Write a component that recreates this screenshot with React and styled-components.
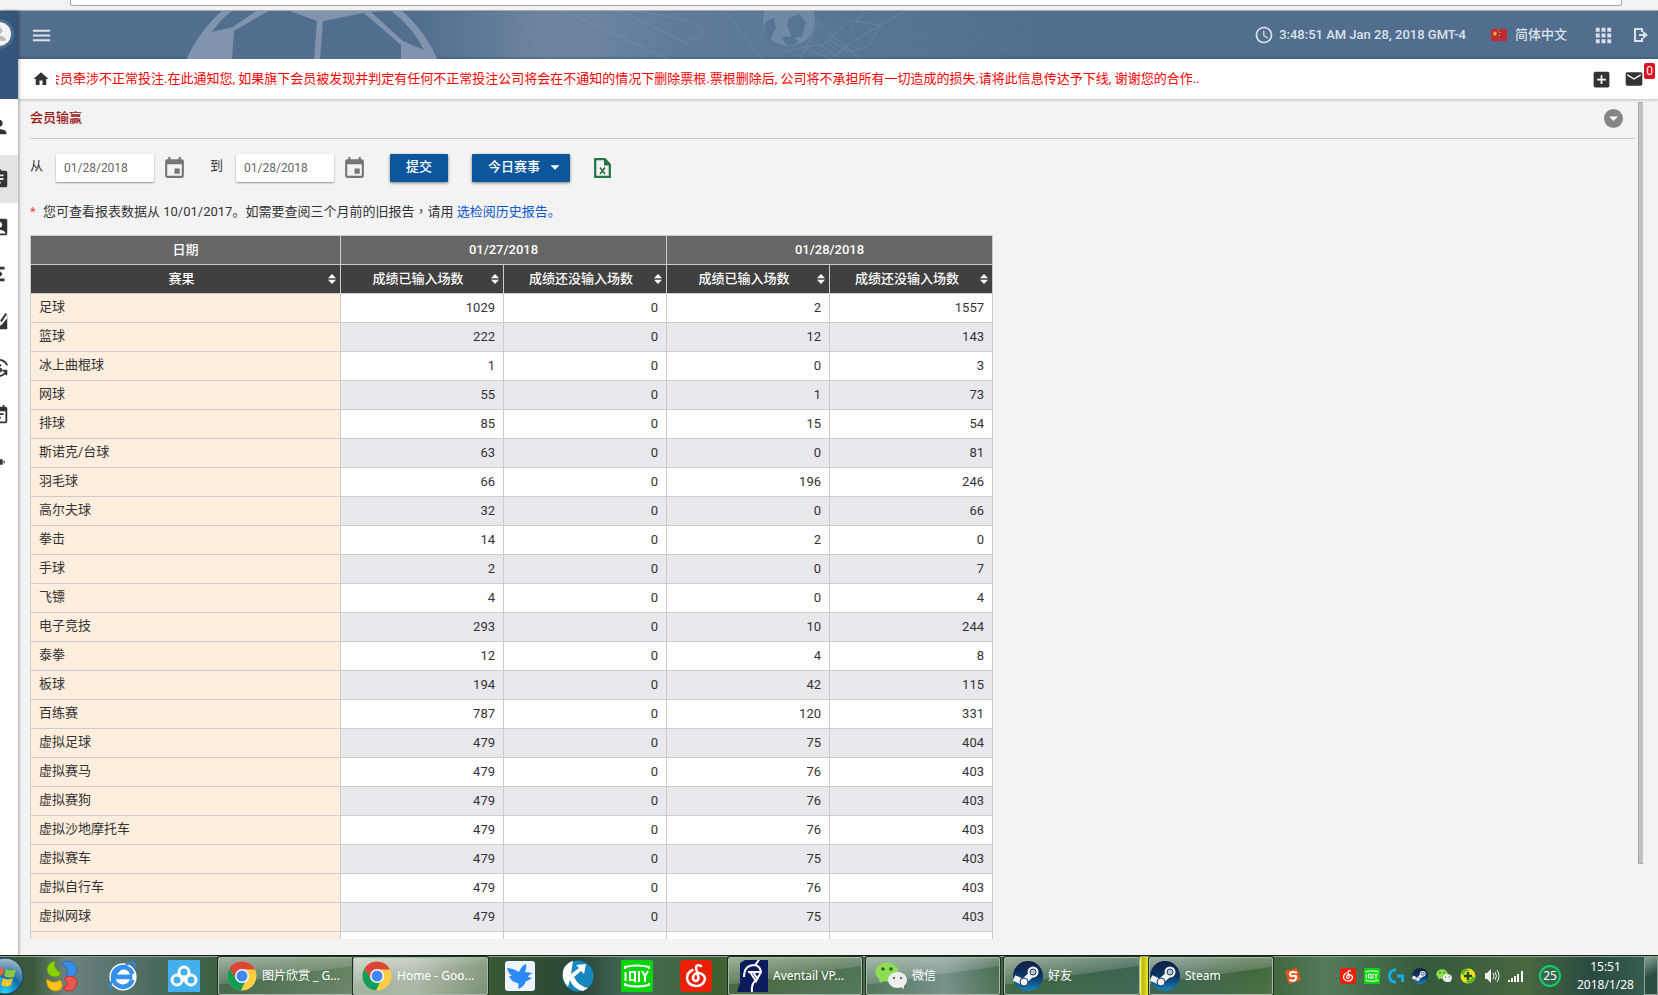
import React from "react";
import styled, { createGlobalStyle } from "styled-components";
import {
  MdMenu, MdAccessTime, MdApps, MdHome, MdAddBox, MdEmail, MdPerson,
  MdAssignment, MdAccountBox, MdFunctions, MdEventNote, MdEvent, MdArrowDropDown,
} from "react-icons/md";

const Global = createGlobalStyle`
  * { box-sizing: border-box; }
  body { margin: 0; background: #f3f3f3; color: #333; font: 13px/16px Roboto, "Noto Sans CJK SC", sans-serif; }
  button, input { font: inherit; margin: 0; }
  svg { display: block; flex: none; }
`;

const Screen = styled.div`
  display: flex;
  flex-direction: column;
  height: 100vh;
  overflow: hidden;
`;

/* browser chrome */
const BrowserStrip = styled.div`
  flex: none;
  height: 11px;
  padding: 0 36px 0 70px;
  background: #f2f2f2;
  border-bottom: 1px solid #a9a9a9;
`;
const AddressBar = styled.div`
  height: 6px;
  background: #fff;
  border: 1px solid #a5a5a5;
  border-top: 0;
  border-radius: 0 0 3px 3px;
`;

const AppBody = styled.div`
  flex: 1;
  min-height: 0;
  display: flex;
`;

/* sidebar */
const Sidebar = styled.aside`
  flex: none;
  width: 18px;
  overflow: hidden;
  background: #fff;
`;
const SidebarShell = styled.div`
  position: relative;
  z-index: 2;
  display: flex;
  box-shadow: 1px 0 3px rgba(0, 0, 0, 0.35);
`;
const Profile = styled.div`
  height: 88px;
  padding: 11px 7px 0 0;
  display: flex;
  justify-content: flex-end;
  background: #34567b;
`;
const Avatar = styled.div`
  flex: none;
  display: grid;
  place-items: center;
  width: 24px;
  height: 24px;
  border-radius: 50%;
  background: #f3f3f3;
  color: #bdbdbd;
  box-shadow: 0 0 0 3px #4d6c8f;
`;
const SideLink = styled.a`
  display: flex;
  align-items: center;
  justify-content: flex-end;
  height: ${(p) => (p.$active ? 48 : 47)}px;
  padding-right: 8px;
  color: #333;
  background: ${(p) => (p.$active ? "#e4e4e4" : "transparent")};
  &:first-child { height: 56px; }
`;

const Main = styled.div`
  flex: 1;
  min-width: 0;
  display: flex;
  flex-direction: column;
`;

/* header */
const Header = styled.header`
  position: relative;
  flex: none;
  height: 48px;
  overflow: hidden;
  background: linear-gradient(90deg, #526e8e 0 400px, #6c82a0 520px, #6b82a1 580px, #5f7a9a 660px, #587495 860px, #526e8e 1020px);
  box-shadow: inset 0 -2px 1px rgba(40, 70, 105, 0.3);
`;
const HeaderArt = styled.svg`
  position: absolute;
  left: 0;
  top: 0;
`;
const HeaderRow = styled.div`
  position: relative;
  display: flex;
  align-items: center;
  height: 100%;
  padding: 0 9px 0 12px;
  color: #dce2e9;
  font-weight: 500;
`;
const IconButton = styled.button`
  display: grid;
  place-items: center;
  padding: 0;
  border: 0;
  background: none;
  color: ${(p) => p.$color || "inherit"};
`;
const HeaderRight = styled.div`
  display: flex;
  align-items: center;
  margin-left: auto;
`;
const Clock = styled.div`
  display: flex;
  align-items: center;
  gap: 5px;
  margin-right: 25px;
`;
const Language = styled.button`
  display: flex;
  align-items: center;
  gap: 8px;
  padding: 0;
  margin-right: 25px;
  border: 0;
  background: none;
  color: inherit;
`;
const HeaderActions = styled.div`
  display: flex;
  align-items: center;
  gap: 18px;
`;

/* announcement */
const NoticeBar = styled.div`
  flex: none;
  display: flex;
  align-items: center;
  height: 41px;
  padding: 0 3px 0 14px;
  background: #fff;
  border-bottom: 1px solid #d2d2d2;
  box-shadow: 0 1px 2px rgba(0, 0, 0, 0.12);
`;
const HomeLink = styled.a`
  color: #333;
`;
const Ticker = styled.div`
  flex: 1;
  min-width: 0;
  margin: 0 40px 0 6px;
  overflow: hidden;
  white-space: nowrap;
  text-indent: -9px;
  color: #f00;
`;
const NoticeActions = styled.div`
  display: flex;
  align-items: center;
  gap: 12px;
`;
const MailBox = styled.div`
  position: relative;
  padding-right: 11px;
`;
const MailCount = styled.span`
  position: absolute;
  right: 0;
  top: -6px;
  padding: 0 2px;
  border-radius: 2px;
  background: #dc1322;
  color: #fff;
  font-size: 12px;
`;

/* report */
const Report = styled.main`
  flex: 1;
  min-height: 0;
  display: flex;
  padding: 2px 15px 16px 12px;
`;
const ReportBody = styled.div`
  flex: 1;
  min-width: 0;
  overflow: hidden;
  padding-right: 3px;
`;
const ScrollTrack = styled.div`
  flex: none;
  width: 5px;
`;
const ScrollThumb = styled.div`
  height: 91%;
  background: #c1c1c1;
  border: solid #aaa;
  border-width: 1px 0 1px 1px;
`;
const TitleRow = styled.div`
  display: flex;
  align-items: center;
  justify-content: space-between;
  height: 37px;
  padding: 0 12px 4px 0;
  border-bottom: 1px solid #ccc;
`;
const Title = styled.h1`
  margin: 0;
  font-size: 13px;
  font-weight: 500;
  color: #9b1515;
`;
const Filters = styled.form`
  display: flex;
  align-items: center;
  height: 28px;
  margin-top: 15px;
`;
const DateField = styled.div`
  display: flex;
  align-items: center;
  margin-right: 23px;
`;
const DateLabel = styled.label`
  width: 26px;
  padding-bottom: 4px;
`;
const DateInput = styled.input`
  width: 98px;
  height: 28px;
  margin-right: 8px;
  padding: 0 8px;
  border: 0;
  border-radius: 1px;
  background: #fff;
  box-shadow: 0 1px 2px rgba(0, 0, 0, 0.4);
  color: #666;
  font-size: 12px;
`;
const ActionButton = styled.button`
  display: flex;
  align-items: center;
  gap: 4px;
  height: 28px;
  margin-right: 24px;
  padding: 0 ${(p) => (p.$menu ? 4 : 16)}px 2px 16px;
  border: 0;
  border-radius: 1px;
  background: #0d569d;
  box-shadow: 0 1px 3px rgba(0, 0, 0, 0.5);
  color: #fff;
  font-weight: 500;
`;
const Hint = styled.p`
  margin: 22px 0 15px;
  white-space: nowrap;
`;
const Star = styled.span`
  display: inline-block;
  width: 13px;
  color: #f44336;
`;
const CenteredComma = styled.span`
  font-family: "Noto Sans CJK TC", sans-serif;
  line-height: 1;
`;
const HistoryLink = styled.a`
  color: #0b57d0;
  text-decoration: none;
`;
const Table = styled.table`
  width: 962px;
  table-layout: fixed;
  border-collapse: collapse;
`;
const GroupHead = styled.th`
  height: 29px;
  padding: 0;
  border: 1px solid #ccc;
  background: #666;
  color: #fff;
  font-weight: 500;
`;
const SortHead = styled(GroupHead)`
  background: #404040;
`;
const SortButton = styled.button`
  display: grid;
  grid-template-columns: 1fr 8px;
  align-items: center;
  width: 100%;
  padding: 0 4px;
  border: 0;
  background: none;
  color: #fff;
  font-weight: 500;
`;
const SportCell = styled.th`
  height: 29px;
  padding: 0 8px 2px;
  border: 1px solid #ccc;
  background: #ffeede;
  text-align: left;
  font-weight: 400;
`;
const CountCell = styled.td`
  height: 29px;
  padding: 0 8px;
  border: 1px solid #ccc;
  text-align: right;
`;
const SportRow = styled.tr`
  background: #fff;
  &:nth-child(even) { background: #e9e8ed; }
`;

/* taskbar */
const Taskbar = styled.footer`
  position: relative;
  z-index: 3;
  flex: none;
  display: flex;
  align-items: center;
  height: 40px;
  border-top: 1px solid #152019;
  box-shadow: inset 0 1px 0 #8fa295;
  color: #fff;
  font: 12px/16px "Noto Sans", "Noto Sans CJK SC", sans-serif;
  background: linear-gradient(90deg, #2f5032 0, #3b5c3c 2%, #6f8380 4%, #5e7873 6%, #48685a 10%, #3d6043 13%, #5a7a58 20%, #75896d 25%, #3a5a32 29%, #2a4638 35%, #466a58 38%, #3f6233 43%, #496e50 52%, #6f8b85 57%, #38603d 61%, #355c4a 70%, #3d6335 76%, #55795c 80%, #34593d 86%, #48683f 92%, #2a4a42 96%, #3b6050 100%);
`;
const StartButton = styled.button`
  flex: none;
  display: flex;
  justify-content: flex-end;
  width: 24px;
  padding: 0;
  border: 0;
  overflow: hidden;
  background: none;
`;
const Launchers = styled.div`
  display: flex;
  align-items: center;
  gap: ${(p) => p.$gap}px;
  padding: 0 ${(p) => p.$end}px 0 ${(p) => p.$start}px;
`;
const LaunchButton = styled.button`
  padding: 0;
  border: 0;
  background: none;
`;
const Task = styled.button`
  flex: none;
  display: flex;
  align-items: center;
  gap: 5px;
  width: ${(p) => p.$width}px;
  height: 38px;
  padding: 0 ${(p) => (p.$flush ? 0 : 8)}px;
  overflow: hidden;
  white-space: nowrap;
  border: 1px solid #a9b8a8;
  border-radius: 2px;
  box-shadow: 0 0 0 1px #1f3022;
  color: #fff;
  background: ${(p) => p.$active
    ? "linear-gradient(170deg, rgba(255,255,255,.72), rgba(255,255,255,.42) 50%, rgba(255,255,255,.35))"
    : "linear-gradient(172deg, rgba(255,255,255,.5), rgba(255,255,255,.18) 48%, rgba(255,255,255,.04) 50%, rgba(255,255,255,.08))"};
  margin-left: ${(p) => p.$before || 0}px;
`;
const Alert = styled.span`
  flex: none;
  width: 9px;
  height: 38px;
  background: linear-gradient(90deg, #fdfb55, #b9b613 30%, #f5f32c);
`;
const Tray = styled.div`
  display: flex;
  align-items: center;
  height: 100%;
  margin-left: auto;
`;
const TrayIcons = styled.div`
  display: flex;
  gap: 8px;
  margin: 0 15px 0 39px;
`;
const Score = styled.span`
  display: grid;
  place-items: center;
  width: 22px;
  height: 22px;
  border: 2px solid #10cf6a;
  border-radius: 50%;
  background: #35674a;
`;
const DateTime = styled.time`
  width: 83px;
  padding-left: 6px;
  line-height: 18px;
  text-align: center;
`;
const ShowDesktop = styled.button`
  width: 14px;
  height: 39px;
  padding: 0;
  border: 1px solid #8ba294;
  background: linear-gradient(150deg, #8ba294, #2d4d44 50%);
`;

const Art = () => (
  <HeaderArt width="1000" height="48" viewBox="18 11 1000 48" aria-hidden="true">
    <circle cx="312" cy="114" r="137" fill="#8094ae" />
    <g fill="#526e8e">
      <path d="M212 32 Q220 20 232 11 H256 L233 27Z" />
      <path d="M268 11H290L317 21L314 59H232L234 31Z" />
      <path d="M323 21L364 13L401 45V59H320Z" />
      <path d="M371 12L391 11Q412 26 424 50L403 41Z" />
    </g>
    <g fill="none" stroke="#8c9fb9" strokeOpacity=".35">
      <path d="M515 11L545 59M565 11L668 59M620 11L690 45M635 11Q690 18 702 30Q704 42 690 38M725 11L762 59" />
      <path d="M818 50L850 20L880 25L870 45L850 52L830 40M805 48L830 59L855 40L905 11M850 30L865 12M782 52L820 44L840 59M800 59L818 22L860 59" />
    </g>
    <circle cx="789" cy="20" r="26" fill="#7089a7" />
    <g fill="#587495">
      <path d="M765 22L774 18L776 28L769 41Q763 30 765 22Z" />
      <path d="M789 18L799 14L806 22L802 37H792L787 25Z" />
      <path d="M782 37L795 36L798 43L789 46Q783 43 782 37Z" />
    </g>
    <path d="M866 56L1010 48M870 38L1018 30" stroke="#8094ae" strokeOpacity=".25" strokeDasharray="2 3" />
  </HeaderArt>
);

const Flag = () => (
  <svg width="16" height="12" viewBox="0 0 16 12"><path fill="#c02c36" d="M0 0h16v12H0z" /><path fill="#e9c534" d="m4 2 .7 1.5L6.500 4 5 5l.3 2L4 6l-1.500 1L3 5 1.500 4l1.800-.5z" /><path stroke="#e9c534" d="M7 1.500h1M8.500 3.500h1M8 6.500h1" /></svg>
);
const Logout = () => (
  <svg width="16" height="16" viewBox="0 0 16 16" fill="none"><path d="M9 5V2H2v12h7v-3" stroke="currentColor" strokeWidth="2" /><path d="M6 7h4V4l5 4-5 4V9H6z" fill="currentColor" /></svg>
);
const DropCircle = () => (
  <svg width="19" height="19" viewBox="0 0 19 19"><circle cx="9.500" cy="9.500" r="9.500" fill="#858585" /><path d="M5 7.500h9l-4.500 4.500z" fill="#fff" /></svg>
);
const Excel = () => (
  <svg width="18" height="20" viewBox="0 0 18 20" fill="none" stroke="#237346"><path d="M1.200 1.200h9.600l5 5.300v12.300H1.200z" strokeWidth="2.200" /><path d="M10.500 1v6H16" fill="#237346" /><path d="M6 9.500l5 6.500M11 9.500L6 16" strokeWidth="1.600" /></svg>
);
const SortArrows = () => (
  <svg width="8" height="10" viewBox="0 0 8 10" fill="#fff"><path d="M0 4.300L4 0l4 4.300zM0 5.700h8L4 10z" /></svg>
);
const Trend = () => (
  <svg width="22" height="22" viewBox="0 0 24 24"><path d="M3 21V9l8 7L21 5v16z" fill="currentColor" /><path d="M3 11l8 7.500L21 8" fill="none" stroke="#fff" strokeWidth="1.500" /><path d="M11 12l4 3 6-10" fill="none" stroke="#fff" strokeWidth="1.500" /><path d="M14 12l6-8" stroke="currentColor" strokeWidth="2" /></svg>
);
const MoneyCycle = () => (
  <svg width="22" height="22" viewBox="0 0 24 24" fill="none" stroke="currentColor" strokeWidth="2"><path d="M4 9a9 9 0 0 1 15-3l2 3M20 15a9 9 0 0 1-15 3l-2-3M21 15h-5M20 15v5M14.500 9.500c-3-2-6 1-2.500 2.500 5 1.500 2 5-2 3M12 6.500v11" /></svg>
);
const Horn = () => (
  <svg width="22" height="22" viewBox="0 0 24 24" fill="currentColor"><path d="M3 9v6h4l4 3V6L7 9zM13 9h3v6h-3zM17 10c2 1 2 3 0 4z" /></svg>
);

const Orb = () => (
  <svg width="38" height="38" viewBox="0 0 38 38"><defs><radialGradient id="orb" cx=".5" cy=".95" r=".9"><stop stopColor="#25d5ff" /><stop offset=".5" stopColor="#126aa7" /><stop offset="1" stopColor="#9db6c5" /></radialGradient></defs><circle cx="19" cy="19" r="18" fill="url(#orb)" stroke="#173b58" /><path d="M10 12q4-3 8 0l-2 7q-4-3-8 0z" fill="#ee6636" /><path d="M20 12q5 3 10 0l-2 8q-5 2-10-1z" fill="#8dc63f" /><path d="M8 21q4-3 8 0l-2 7q-4-3-8 0z" fill="#3eabe5" /><path d="M17 21q5 3 10 0l-2 7q-5 3-10 0z" fill="#fdc62f" /></svg>
);
const Petals = () => (
  <svg width="32" height="32" viewBox="0 0 32 32"><path d="M9 1C-1 3-2 16 9 17Q15 17 14 12Q7 9 9 1Z" fill="#8bd000" stroke="#64a100" /><path d="M15 4C22-3 34 4 30 14Q26 19 20 16Q24 7 15 4Z" fill="#3b8ee8" stroke="#2269b5" /><path d="M1 19C-1 29 9 34 15 29Q18 24 14 20Q7 25 1 19Z" fill="#ffc41a" stroke="#cf8c00" /><path d="M18 19C23 13 32 17 31 24Q29 32 20 31Q17 29 18 27Q25 25 18 19Z" fill="#ef564e" stroke="#b92e29" /></svg>
);
const Explorer = () => (
  <svg width="30" height="30" viewBox="0 0 32 32"><circle cx="16" cy="17" r="14.500" fill="#fff" /><path d="M26 20A10.500 10.500 0 1 1 26 14M8 17h18" fill="none" stroke="#3791ef" strokeWidth="5" /><path d="M4 31C-2 27 10 7 24 2q6-2 4 5" fill="none" stroke="#2989ed" strokeWidth="2" /></svg>
);
const Cloud = () => (
  <svg width="32" height="32" viewBox="0 0 32 32"><path fill="#43afef" d="M0 0h32v32H0z" /><g fill="none" stroke="#fff" strokeWidth="3"><circle cx="16" cy="12" r="5" /><circle cx="9" cy="20" r="5" /><circle cx="23" cy="20" r="5" /></g><path d="M13 17l6 6" stroke="#fff" strokeWidth="3" /></svg>
);
const Chrome = () => (
  <svg width="30" height="30" viewBox="0 0 30 30"><circle cx="15" cy="15" r="14.500" fill="#ffcd46" /><path d="M2.500 7.500A14.500 14.500 0 0 1 28 8.500H15L8.500 18z" fill="#db4437" /><path d="M2.500 7.500L9 18.500Q12 22 18 21L14 29.500A14.500 14.500 0 0 1 2.500 7.500" fill="#0f9d58" /><circle cx="15" cy="15" r="7" fill="#fff" /><circle cx="15" cy="15" r="5.500" fill="#4285f4" /></svg>
);
const Bird = () => (
  <svg width="30" height="30" viewBox="0 0 30 30"><rect width="30" height="30" rx="3" fill="#edf4ff" /><path d="M2 7q6 0 12 4 3-7 7-8 1 3-1 8l8 1q-4 1-5 4l4 1q-4 3-6 3-2 6-8 8 1-4 0-6-6 0-9-7l3 0q-4-3-5-8z" fill="#2b8af7" /></svg>
);
const KMark = () => (
  <svg width="32" height="32" viewBox="0 0 32 32"><circle cx="16" cy="16" r="15.500" fill="#1688bf" /><path d="M2 8q4-6 9-7L9 14l8-6-3-3 10-1-2 10-3-3-7 6q4 9 14 11l-5 3Q11 29 8 20l-2 7Q-2 18 2 8Z" fill="#fff" /></svg>
);
const Iqiyi = ({ size = 32 }) => (
  <svg width={size} height={size} viewBox="0 0 32 32"><rect width="32" height="32" rx="2" fill="#0bd40b" /><g fill="none" stroke="#fff" strokeWidth="2"><path d="M4 9V7q12-3 24 0v2M4 23v2q12 3 24 0v-2M4.500 12v9M9 12h5v8H9zM13 20l2 2M18 11v11M21 11l3 5 3-5M24 16v6" /></g></svg>
);
const Netease = ({ size = 32 }) => (
  <svg width={size} height={size} viewBox="0 0 32 32"><rect width="32" height="32" rx="4" fill="#e72007" /><path d="M21 6Q16 4 16 8L18.500 18Q18 21 15.500 21 12.500 20.500 13 17 14.500 12.500 19 13 25 14.500 25 19 23.500 26 16 26 8 25.500 7 18.500 7 12.500 12.500 10" fill="none" stroke="#fff" strokeWidth="2.500" strokeLinecap="round" strokeLinejoin="round" /></svg>
);
const Aventail = () => (
  <svg width="31" height="32" viewBox="0 0 31 32"><path d="M3 3L8 0h23v32H0l3-9z" fill="#0b1c5c" /><path d="M7 17Q7 5 18 5l4-5M18 5q5 1 6 7H11M13 12l6 9 5-9M19 20q-5 4-4 12M16 12l4 6" fill="none" stroke="#fff" strokeWidth="2" /></svg>
);
const Wechat = ({ size = 32 }) => (
  <svg width={size} height={size} viewBox="0 0 32 32"><ellipse cx="12" cy="12" rx="11.500" ry="9.500" fill="#8ede53" /><path d="M4 18l1 5 5-3" fill="#8ede53" /><circle cx="8" cy="9" r="1.700" fill="#2c5b21" /><circle cx="16" cy="9" r="1.700" fill="#2c5b21" /><ellipse cx="22.500" cy="20" rx="9.500" ry="8" fill="#eee" /><path d="M25 26l4 3v-5" fill="#eee" /><circle cx="19" cy="18" r="1.300" fill="#777" /><circle cx="26" cy="18" r="1.300" fill="#777" /></svg>
);
const SteamMark = ({ size = 30 }) => (
  <svg width={size} height={size} viewBox="0 0 30 30"><defs><linearGradient id="steam" x2="0" y2="1"><stop stopColor="#111d42" /><stop offset=".55" stopColor="#0c3a6a" /><stop offset="1" stopColor="#1685bd" /></linearGradient></defs><circle cx="15" cy="15" r="15" fill="url(#steam)" /><path d="M1 17l9 4 8-7" stroke="#f1f1f1" strokeWidth="6" fill="none" /><circle cx="20" cy="11" r="5.500" fill="#f1f1f1" /><circle cx="20" cy="11" r="3" fill="#bac8d3" stroke="#133c68" /><circle cx="11" cy="21" r="4" fill="#f1f1f1" stroke="#133c68" /></svg>
);
const Sogou = () => (
  <svg width="16" height="16" viewBox="0 0 16 16"><path d="M0 3L12 0l4 12-12 4z" fill="#f1521b" /><path d="M12 4.500Q5 3 5 6t3.500 2T11 10.500 4.500 12" fill="none" stroke="#fff" strokeWidth="2.200" /></svg>
);
const Logitech = () => (
  <svg width="16" height="16" viewBox="0 0 16 16" fill="none" stroke="#10aeec" strokeWidth="2.800"><path d="M8 2Q1.500 2 1.500 8T8 14M9 8h5.500v6" /></svg>
);
const Shield = () => (
  <svg width="16" height="16" viewBox="0 0 16 16"><circle cx="8" cy="8" r="7.500" fill="#f2df1c" /><path d="M1 4q1-3 6-3l3 2q-5-1-7 5zM15 10q-2 6-7 5l-3-2q6 0 8-5z" fill="#54b529" /><path d="M8 4v8M4 8h8" stroke="#174f18" strokeWidth="2.400" /></svg>
);
const Volume = () => (
  <svg width="16" height="16" viewBox="0 0 16 16"><path d="M1 5h2l4-4v14l-4-4H1z" fill="#eee" /><path d="M9 5q2 3 0 6M11 4q3 4 0 8M13 2q4 6 0 12" stroke="#eee" fill="none" /></svg>
);
const Signal = () => (
  <svg width="16" height="16" viewBox="0 0 16 16" fill="#fff"><path d="M0 12h2v2H0zM3 10h2v4H3zM6 8h2v6H6zM9 6h2v8H9zM13 3h2v11h-2z" /></svg>
);

const sideLinks = [
  ["会员", <MdPerson size={22} />],
  ["报表", <MdAssignment size={22} />],
  ["账户", <MdAccountBox size={22} />],
  ["总计", <MdFunctions size={22} />],
  ["走势", <Trend />],
  ["转账", <MoneyCycle />],
  ["赛程", <MdEventNote size={22} />],
  ["公告", <Horn />],
];

const sports = [
  ["足球", 1029, 0, 2, 1557], ["篮球", 222, 0, 12, 143], ["冰上曲棍球", 1, 0, 0, 3],
  ["网球", 55, 0, 1, 73], ["排球", 85, 0, 15, 54], ["斯诺克/台球", 63, 0, 0, 81],
  ["羽毛球", 66, 0, 196, 246], ["高尔夫球", 32, 0, 0, 66], ["拳击", 14, 0, 2, 0],
  ["手球", 2, 0, 0, 7], ["飞镖", 4, 0, 0, 4], ["电子竞技", 293, 0, 10, 244],
  ["泰拳", 12, 0, 4, 8], ["板球", 194, 0, 42, 115], ["百练赛", 787, 0, 120, 331],
  ["虚拟足球", 479, 0, 75, 404], ["虚拟赛马", 479, 0, 76, 403], ["虚拟赛狗", 479, 0, 76, 403],
  ["虚拟沙地摩托车", 479, 0, 76, 403], ["虚拟赛车", 479, 0, 75, 403],
  ["虚拟自行车", 479, 0, 76, 403], ["虚拟网球", 479, 0, 75, 403], ["", "", "", "", ""],
];
const sortHeads = ["赛果", "成绩已输入场数", "成绩还没输入场数", "成绩已输入场数", "成绩还没输入场数"];

function ResultsTable() {
  return (
    <Table>
      <colgroup><col width="310" /><col width="163" /><col width="163" /><col width="163" /><col width="163" /></colgroup>
      <thead>
        <tr>
          <GroupHead scope="col">日期</GroupHead>
          <GroupHead scope="colgroup" colSpan={2}>01/27/2018</GroupHead>
          <GroupHead scope="colgroup" colSpan={2}>01/28/2018</GroupHead>
        </tr>
        <tr>
          {sortHeads.map((label, i) => (
            <SortHead scope="col" key={i}>
              <SortButton type="button"><span>{label}</span><SortArrows /></SortButton>
            </SortHead>
          ))}
        </tr>
      </thead>
      <tbody>
        {sports.map(([name, ...counts], i) => (
          <SportRow key={i}>
            <SportCell scope="row">{name}</SportCell>
            {counts.map((n, j) => <CountCell key={j}>{n}</CountCell>)}
          </SportRow>
        ))}
      </tbody>
    </Table>
  );
}

function DateFilter({ id, label }) {
  return (
    <DateField>
      <DateLabel htmlFor={id}>{label}</DateLabel>
      <DateInput id={id} defaultValue="01/28/2018" />
      <IconButton type="button" $color="#757575" aria-label="日历"><MdEvent size={25} /></IconButton>
    </DateField>
  );
}

export default function App() {
  return (
    <Screen>
      <Global />
      <BrowserStrip><AddressBar /></BrowserStrip>
      <AppBody>
        <SidebarShell>
          <Sidebar>
            <Profile><Avatar><MdPerson size={20} /></Avatar></Profile>
            <nav>
              {sideLinks.map(([label, icon], i) => (
                <SideLink href="#" key={label} aria-label={label} $active={i === 1}>{icon}</SideLink>
              ))}
            </nav>
          </Sidebar>
        </SidebarShell>
        <Main>
          <Header>
            <Art />
            <HeaderRow>
              <IconButton aria-label="菜单"><MdMenu size={23} /></IconButton>
              <HeaderRight>
                <Clock><MdAccessTime size={20} />3:48:51 AM Jan 28, 2018 GMT-4</Clock>
                <Language><Flag />简体中文</Language>
                <HeaderActions>
                  <IconButton aria-label="应用"><MdApps size={23} /></IconButton>
                  <IconButton aria-label="退出"><Logout /></IconButton>
                </HeaderActions>
              </HeaderRight>
            </HeaderRow>
          </Header>
          <NoticeBar>
            <HomeLink href="#" aria-label="主页"><MdHome size={18} /></HomeLink>
            <Ticker>会员牵涉不正常投注.在此通知您, 如果旗下会员被发现并判定有任何不正常投注公司将会在不通知的情况下删除票根.票根删除后, 公司将不承担所有一切造成的损失.请将此信息传达予下线, 谢谢您的合作..</Ticker>
            <NoticeActions>
              <IconButton aria-label="添加" $color="#333"><MdAddBox size={21} /></IconButton>
              <MailBox>
                <IconButton aria-label="邮件" $color="#333"><MdEmail size={20} /></IconButton>
                <MailCount>0</MailCount>
              </MailBox>
            </NoticeActions>
          </NoticeBar>
          <Report>
            <ReportBody>
              <TitleRow>
                <Title>会员输赢</Title>
                <IconButton aria-label="展开"><DropCircle /></IconButton>
              </TitleRow>
              <Filters>
                <DateFilter id="from" label="从" />
                <DateFilter id="to" label="到" />
                <ActionButton type="button">提交</ActionButton>
                <ActionButton type="button" $menu>今日赛事<MdArrowDropDown size={22} /></ActionButton>
                <IconButton type="button" aria-label="导出 Excel"><Excel /></IconButton>
              </Filters>
              <Hint><Star>*</Star>您可查看报表数据从 10/01/2017。如需要查阅三个月前的旧报告<CenteredComma lang="zh-Hant">，</CenteredComma>请用 <HistoryLink href="#">选检阅历史报告。</HistoryLink></Hint>
              <ResultsTable />
            </ReportBody>
            <ScrollTrack><ScrollThumb /></ScrollTrack>
          </Report>
        </Main>
      </AppBody>
      <Taskbar>
        <StartButton aria-label="开始"><Orb /></StartButton>
        <Launchers $gap={30} $start={22} $end={18}>
          <LaunchButton aria-label="搜索"><Petals /></LaunchButton>
          <LaunchButton aria-label="浏览器"><Explorer /></LaunchButton>
          <LaunchButton aria-label="云盘"><Cloud /></LaunchButton>
        </Launchers>
        <Task $width={135}><Chrome />图片欣赏 _ G...</Task>
        <Task $width={135} $active><Chrome />Home - Goo...</Task>
        <Launchers $gap={27} $start={17} $end={16}>
          <LaunchButton aria-label="迅雷"><Bird /></LaunchButton>
          <LaunchButton aria-label="加速器"><KMark /></LaunchButton>
          <LaunchButton aria-label="爱奇艺"><Iqiyi /></LaunchButton>
          <LaunchButton aria-label="网易云音乐"><Netease /></LaunchButton>
        </Launchers>
        <Task $width={134}><Aventail />Aventail VP...</Task>
        <Task $width={134} $before={4}><Wechat />微信</Task>
        <Task $width={136} $before={4}><SteamMark />好友</Task>
        <Alert />
        <Task $width={124} $flush><SteamMark />Steam</Task>
        <Tray>
          <Sogou />
          <TrayIcons>
            <Netease size={16} />
            <Iqiyi size={16} />
            <Logitech />
            <SteamMark size={16} />
            <Wechat size={16} />
            <Shield />
            <Volume />
            <Signal />
          </TrayIcons>
          <Score>25</Score>
          <DateTime>15:51<br />2018/1/28</DateTime>
          <ShowDesktop aria-label="显示桌面" />
        </Tray>
      </Taskbar>
    </Screen>
  );
}
